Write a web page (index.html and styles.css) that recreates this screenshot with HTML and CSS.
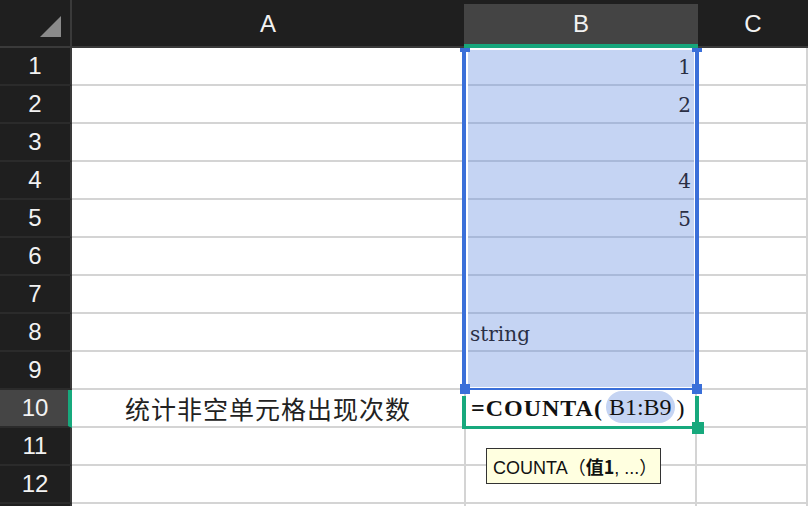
FILE: index.html
```html
<html>
<head>
    <title>COUNTA</title>
    <link rel="stylesheet" href="styles.css">
</head>
<body>
    <div class="wrap">
        <div class="head">
            <div class="corner">
                <svg width="70" height="46" viewBox="0 0 70 46"><polygon points="40,37 61,37 61,16" fill="#8a8a8a"/></svg>
            </div>
            <div class="hc col-a">A</div>
            <div class="hc col-b">B</div>
            <div class="hc col-c">C</div>
        </div>

        <div class="sheet">
            <div class="rh">1</div><div class="cell"></div><div class="cell sel num">1</div><div class="cell"></div>
            <div class="rh">2</div><div class="cell"></div><div class="cell sel num">2</div><div class="cell"></div>
            <div class="rh">3</div><div class="cell"></div><div class="cell sel num"></div><div class="cell"></div>
            <div class="rh">4</div><div class="cell"></div><div class="cell sel num">4</div><div class="cell"></div>
            <div class="rh">5</div><div class="cell"></div><div class="cell sel num">5</div><div class="cell"></div>
            <div class="rh">6</div><div class="cell"></div><div class="cell sel"></div><div class="cell"></div>
            <div class="rh">7</div><div class="cell"></div><div class="cell sel"></div><div class="cell"></div>
            <div class="rh">8</div><div class="cell"></div><div class="cell sel txt">string</div><div class="cell"></div>
            <div class="rh">9</div><div class="cell"></div><div class="cell sel"></div><div class="cell"></div>
            <div class="rh active">10</div><div class="cell label">统计非空单元格出现次数</div><div class="cell formula"><b>=COUNTA(</b><span class="ref">B1:B9</span>)</div><div class="cell"></div>
            <div class="rh">11</div><div class="cell"></div><div class="cell"></div><div class="cell"></div>
            <div class="rh">12</div><div class="cell"></div><div class="cell"></div><div class="cell"></div>
            <div class="rh"></div><div class="cell"></div><div class="cell"></div><div class="cell"></div>
        </div>

        <!-- range selection B1:B9 -->
        <div class="range"></div>
        <div class="handle h-tl"></div>
        <div class="handle h-tr"></div>
        <div class="handle h-bl"></div>
        <div class="handle h-br"></div>

        <!-- editing cell B10 -->
        <div class="edit"></div>
        <div class="fill-handle"></div>

        <div class="tip">COUNTA（<b>值1</b>, ...）</div>
    </div>
</body>
</html>
```

FILE: styles.css
```css
body {
    margin: 0;
    background: #fff;
    font-family: 'Liberation Sans', Arial, sans-serif;
}

.wrap {
    position: relative;
    width: 808px;
    height: 506px;
    overflow: hidden;
}

.head {
    position: relative;
    z-index: 3;
    display: flex;
    height: 48px;
    background: #1f1f1f;
}

.corner {
    width: 72px;
    box-sizing: border-box;
    border-right: 2px solid #3a3a3a;
    border-bottom: 2px solid #3a3a3a;
}

.corner svg {
    display: block;
}

.hc {
    box-sizing: border-box;
    color: #f2f2f2;
    font-size: 24px;
    text-align: center;
    line-height: 44px;
    border-bottom: 2px solid #3a3a3a;
}

.col-a {
    width: 392px;
    line-height: 48px;
}

.col-b {
    width: 234px;
    margin-top: 4px;
    height: 44px;
    line-height: 40px;
    background: #444;
    border-bottom: 4px solid #17a67c;
}

.col-c {
    flex: 1;
    line-height: 48px;
}

.sheet {
    display: grid;
    grid-template-columns: 72px 394px 231px 1fr;
    grid-auto-rows: 38px;
}

.rh {
    box-sizing: border-box;
    background: #1f1f1f;
    color: #f2f2f2;
    font-size: 24px;
    text-align: center;
    line-height: 36px;
    border-right: 2px solid #3a3a3a;
    border-bottom: 2px solid #2b2b2b;
}

.rh.active {
    background: #454545;
    border-right: 4px solid #17a97d;
    padding-left: 2px;
}

.cell {
    box-sizing: border-box;
    border-right: 2px solid #d4d4d4;
    border-bottom: 2px solid #d4d4d4;
    color: #1c2033;
    line-height: 36px;
    white-space: nowrap;
}

.cell.sel {
    background: #c5d4f3;
    border-bottom-color: #a9b9d9;
}

.num, .txt {
    font-family: 'DejaVu Serif', serif;
    font-size: 20px;
    color: #2a2f45;
}

.num {
    text-align: right;
    padding-right: 4px;
    line-height: 38px;
}

.txt {
    padding-left: 4px;
    line-height: 40px;
}

.label {
    text-align: center;
    color: #222;
    font-family: 'Noto Sans CJK SC', sans-serif;
    font-size: 25px;
    letter-spacing: 1px;
}

.formula {
    font-family: 'Liberation Serif', 'Times New Roman', serif;
    font-size: 24px;
    color: #111;
    padding-left: 5px;
}

.formula b {
    letter-spacing: 1px;
}

.ref {
    display: inline-block;
    background: #c5d4f3;
    border-radius: 16px;
    padding: 0 3px;
    margin: 0 2px 0 3px;
    line-height: 32px;
    vertical-align: 1px;
}

.range {
    position: absolute;
    z-index: 2;
    left: 462px;
    top: 48px;
    width: 237px;
    height: 342px;
    box-sizing: border-box;
    border-left: 4px solid #3a6fd9;
    border-right: 4px solid #3a6fd9;
    border-bottom: 2px solid #3a6fd9;
    box-shadow: inset 2px 0 #fff, inset -1px 0 #fff, inset 0 2px #fff, inset 0 -1px #fff;
}

.handle {
    position: absolute;
    z-index: 2;
    width: 10px;
    height: 10px;
    background: #3a6fd9;
}

.h-tl { left: 460px; top: 42px; }
.h-tr { left: 692px; top: 42px; }
.h-bl { left: 460px; top: 384px; }
.h-br { left: 692px; top: 384px; }

.edit {
    position: absolute;
    z-index: 2;
    left: 462px;
    top: 396px;
    width: 237px;
    height: 33px;
    box-sizing: border-box;
    border-left: 4px solid #17a97d;
    border-right: 4px solid #17a97d;
    border-bottom: 3px solid #17a97d;
}

.fill-handle {
    position: absolute;
    z-index: 2;
    left: 692px;
    top: 422px;
    width: 12px;
    height: 12px;
    background: #17a97d;
}

.tip {
    position: absolute;
    z-index: 4;
    left: 486px;
    top: 448px;
    width: 175px;
    height: 36px;
    box-sizing: border-box;
    border: 1px solid #333;
    background: #ffffe0;
    color: #111;
    font-family: 'Liberation Sans', 'Noto Sans CJK SC', sans-serif;
    font-size: 18px;
    line-height: 34px;
    padding-left: 6px;
    white-space: nowrap;
}

.tip b {
    font-family: 'Noto Sans CJK SC', sans-serif;
}
```
